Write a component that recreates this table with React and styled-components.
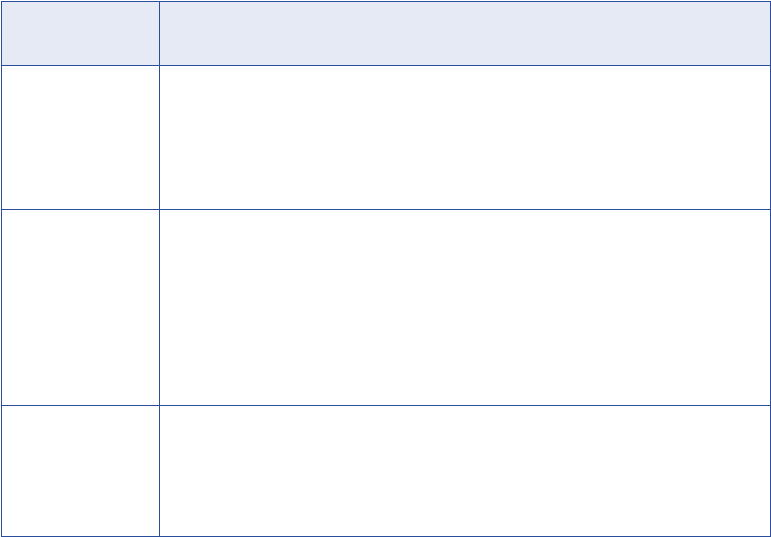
import React from 'react'
import styled, { createGlobalStyle } from 'styled-components';

const GlobalStyle = createGlobalStyle`
    html, body {
        margin: 0;
        padding: 0;
        background: #ffffff;
        font-family: "Liberation Sans", Arial, sans-serif;
    }
`

const Table = styled.table`
    margin: 1px 0 0 1px;
    border-collapse: separate;
    border-spacing: 0;
    border-top: 1px solid #2a4d9c;
    border-left: 1px solid #2a4d9c;
    table-layout: fixed;
    width: 770px;
`

const Cell = styled.td`
    box-sizing: border-box;
    padding: 0;
    border-right: 1px solid #2a4d9c;
    border-bottom: 1px solid #2a4d9c;
    height: ${p => p.$h}px;
    background: ${p => (p.$head ? '#e5eaf5' : '#ffffff')};
    vertical-align: top;
    font-size: 13px;
    color: #222;
`

const HeadCell = styled(Cell).attrs({ as: 'th' })`
    font-weight: bold;
    text-align: left;
`

const rows = [144, 196, 131]

const App = () => {
    return (
        <>
            <GlobalStyle />
            <Table>
                <colgroup>
                    <col style={{ width: 158 }} />
                    <col style={{ width: 611 }} />
                </colgroup>
                <thead>
                    <tr>
                        <HeadCell $head $h={64}></HeadCell>
                        <HeadCell $head $h={64}></HeadCell>
                    </tr>
                </thead>
                <tbody>
                    {rows.map((h, i) => (
                        <tr key={i}>
                            <Cell $h={h}></Cell>
                            <Cell $h={h}></Cell>
                        </tr>
                    ))}
                </tbody>
            </Table>
        </>
    )
}

export default App;
